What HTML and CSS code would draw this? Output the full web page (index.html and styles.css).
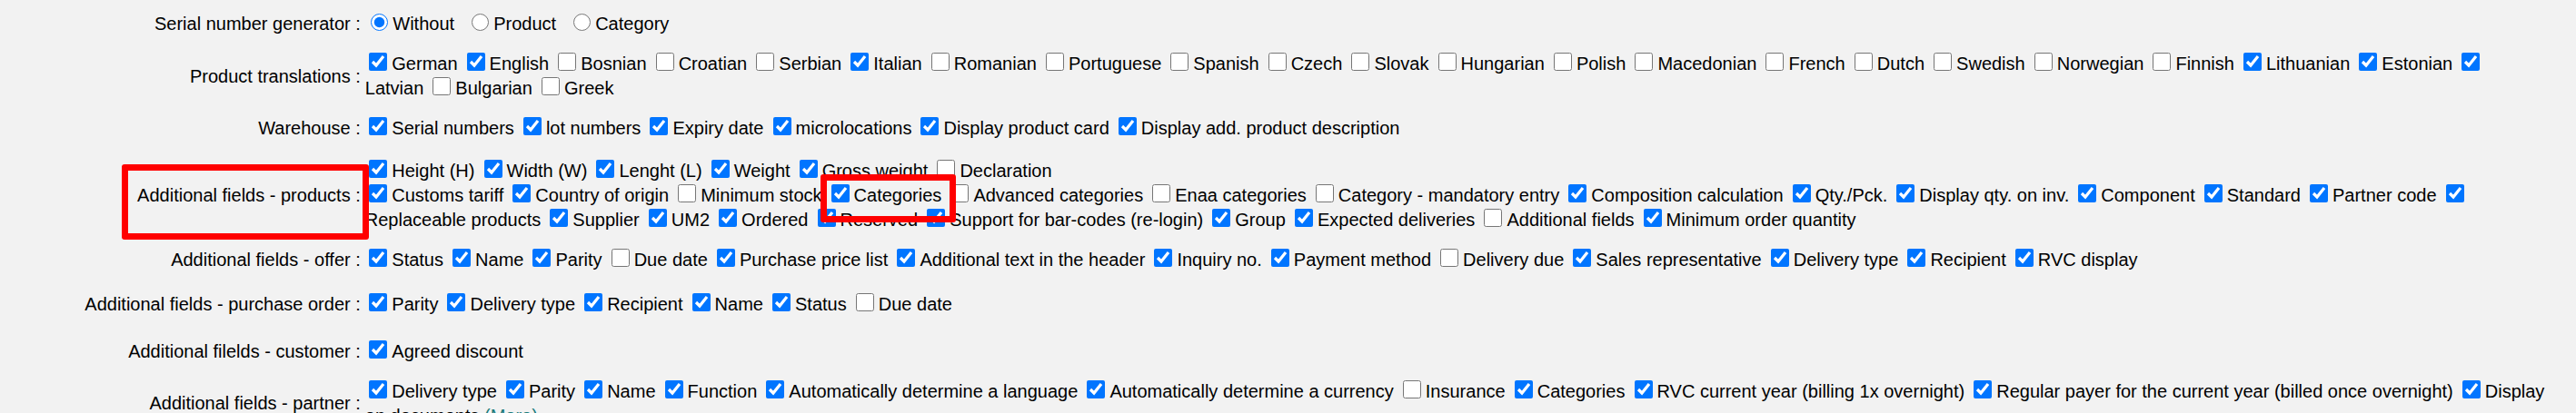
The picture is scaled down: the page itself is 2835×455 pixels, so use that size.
FILE: index.html
```html
<!DOCTYPE html>
<html lang="en">
<head>
<meta charset="utf-8">
<title>Settings</title>
<link rel="stylesheet" href="styles.css">
</head>
<body>
<div class="stage">
<table class="settings">
<colgroup><col class="label-col"><col class="value-col"></colgroup>
<tr class="row-first">
<th>Serial number generator :</th>
<td><label class="opt radio"><input type="radio" name="sn" checked>Without</label> <label class="opt radio"><input type="radio" name="sn">Product</label> <label class="opt radio"><input type="radio" name="sn">Category</label></td>
</tr>
<tr>
<th>Product translations :</th>
<td class="narrow"><label class="opt"><input type="checkbox" checked>German</label> <label class="opt"><input type="checkbox" checked>English</label> <label class="opt"><input type="checkbox">Bosnian</label> <label class="opt"><input type="checkbox">Croatian</label> <label class="opt"><input type="checkbox">Serbian</label> <label class="opt"><input type="checkbox" checked>Italian</label> <label class="opt"><input type="checkbox">Romanian</label> <label class="opt"><input type="checkbox">Portuguese</label> <label class="opt"><input type="checkbox">Spanish</label> <label class="opt"><input type="checkbox">Czech</label> <label class="opt"><input type="checkbox">Slovak</label> <label class="opt"><input type="checkbox">Hungarian</label> <label class="opt"><input type="checkbox">Polish</label> <label class="opt"><input type="checkbox">Macedonian</label> <label class="opt"><input type="checkbox">French</label> <label class="opt"><input type="checkbox">Dutch</label> <label class="opt"><input type="checkbox">Swedish</label> <label class="opt"><input type="checkbox">Norwegian</label> <label class="opt"><input type="checkbox">Finnish</label> <label class="opt"><input type="checkbox" checked>Lithuanian</label> <label class="opt"><input type="checkbox" checked>Estonian</label> <label class="opt"><input type="checkbox" checked>Latvian</label> <label class="opt"><input type="checkbox">Bulgarian</label> <label class="opt"><input type="checkbox">Greek</label></td>
</tr>
<tr>
<th>Warehouse :</th>
<td><label class="opt"><input type="checkbox" checked>Serial numbers</label> <label class="opt"><input type="checkbox" checked>lot numbers</label> <label class="opt"><input type="checkbox" checked>Expiry date</label> <label class="opt"><input type="checkbox" checked>microlocations</label> <label class="opt"><input type="checkbox" checked>Display product card</label> <label class="opt"><input type="checkbox" checked>Display add. product description</label></td>
</tr>
<tr class="row-products">
<th>Additional fields - products :</th>
<td><label class="opt"><input type="checkbox" checked>Height (H)</label> <label class="opt"><input type="checkbox" checked>Width (W)</label> <label class="opt"><input type="checkbox" checked>Lenght (L)</label> <label class="opt"><input type="checkbox" checked>Weight</label> <label class="opt"><input type="checkbox" checked>Gross weight</label> <label class="opt"><input type="checkbox">Declaration</label><br><label class="opt"><input type="checkbox" checked>Customs tariff</label> <label class="opt"><input type="checkbox" checked>Country of origin</label> <label class="opt"><input type="checkbox">Minimum stock</label> <label class="opt"><input type="checkbox" checked>Categories</label> <label class="opt"><input type="checkbox">Advanced categories</label> <label class="opt"><input type="checkbox">Enaa categories</label> <label class="opt"><input type="checkbox">Category - mandatory entry</label> <label class="opt"><input type="checkbox" checked>Composition calculation</label> <label class="opt"><input type="checkbox" checked>Qty./Pck.</label> <label class="opt"><input type="checkbox" checked>Display qty. on inv.</label> <label class="opt"><input type="checkbox" checked>Component</label> <label class="opt"><input type="checkbox" checked>Standard</label> <label class="opt"><input type="checkbox" checked>Partner code</label> <label class="opt"><input type="checkbox" checked>Replaceable products</label> <label class="opt"><input type="checkbox" checked>Supplier</label> <label class="opt"><input type="checkbox" checked>UM2</label> <label class="opt"><input type="checkbox" checked>Ordered</label> <label class="opt"><input type="checkbox" checked>Reserved</label> <label class="opt"><input type="checkbox" checked>Support for bar-codes (re-login)</label> <label class="opt"><input type="checkbox" checked>Group</label> <label class="opt"><input type="checkbox" checked>Expected deliveries</label> <label class="opt"><input type="checkbox">Additional fields</label> <label class="opt"><input type="checkbox" checked>Minimum order quantity</label></td>
</tr>
<tr>
<th>Additional fields - offer :</th>
<td><label class="opt"><input type="checkbox" checked>Status</label> <label class="opt"><input type="checkbox" checked>Name</label> <label class="opt"><input type="checkbox" checked>Parity</label> <label class="opt"><input type="checkbox">Due date</label> <label class="opt"><input type="checkbox" checked>Purchase price list</label> <label class="opt"><input type="checkbox" checked>Additional text in the header</label> <label class="opt"><input type="checkbox" checked>Inquiry no.</label> <label class="opt"><input type="checkbox" checked>Payment method</label> <label class="opt"><input type="checkbox">Delivery due</label> <label class="opt"><input type="checkbox" checked>Sales representative</label> <label class="opt"><input type="checkbox" checked>Delivery type</label> <label class="opt"><input type="checkbox" checked>Recipient</label> <label class="opt"><input type="checkbox" checked>RVC display</label></td>
</tr>
<tr class="row-purchase">
<th>Additional fields - purchase order :</th>
<td><label class="opt"><input type="checkbox" checked>Parity</label> <label class="opt"><input type="checkbox" checked>Delivery type</label> <label class="opt"><input type="checkbox" checked>Recipient</label> <label class="opt"><input type="checkbox" checked>Name</label> <label class="opt"><input type="checkbox" checked>Status</label> <label class="opt"><input type="checkbox">Due date</label></td>
</tr>
<tr class="row-customer">
<th>Additional filelds - customer :</th>
<td><label class="opt"><input type="checkbox" checked>Agreed discount</label></td>
</tr>
<tr>
<th>Additional fields - partner :</th>
<td><label class="opt"><input type="checkbox" checked>Delivery type</label> <label class="opt"><input type="checkbox" checked>Parity</label> <label class="opt"><input type="checkbox" checked>Name</label> <label class="opt"><input type="checkbox" checked>Function</label> <label class="opt"><input type="checkbox" checked>Automatically determine a language</label> <label class="opt"><input type="checkbox" checked>Automatically determine a currency</label> <label class="opt"><input type="checkbox">Insurance</label> <label class="opt"><input type="checkbox" checked>Categories</label> <label class="opt"><input type="checkbox" checked>RVC current year (billing 1x overnight)</label> <label class="opt"><input type="checkbox" checked>Regular payer for the current year (billed once overnight)</label> <label class="opt"><input type="checkbox" checked>Display on documents</label> <a class="more" href="#">(More)</a></td>
</tr>
</table>
<div class="mark mark-label"></div>
<div class="mark mark-item"></div>
</div>
</body>
</html>
```
FILE: styles.css
```css
html, body {
  margin: 0;
  padding: 0;
  background: #f2f2f2;
}

body {
  font-family: "Liberation Sans", Arial, sans-serif;
  font-size: 20px;
  color: #000;
  overflow: hidden;
}

.stage {
  position: relative;
  width: 2835px;
}

.settings {
  border-collapse: collapse;
  table-layout: fixed;
  width: 2815px;
  margin-top: 4.8px;
}

.label-col {
  width: 401.8px;
}

.settings th {
  font-weight: normal;
  text-align: right;
  vertical-align: middle;
  white-space: nowrap;
  padding: 8.5px 5px 8.5px 0;
  line-height: 27px;
}

.settings td {
  vertical-align: middle;
  padding: 8.5px 0;
  line-height: 27px;
}

.settings td.narrow {
  padding-right: 18px;
}

.row-products th,
.row-products td {
  padding-top: 11px;
}

.row-purchase th,
.row-purchase td {
  padding-top: 13.5px;
  padding-bottom: 12px;
}

.row-customer th,
.row-customer td {
  padding-top: 13px;
}

.opt input {
  width: 20px;
  height: 20px;
  margin: 0 5px 0 4.5px;
  vertical-align: -1px;
}

.opt.radio {
  margin-right: 7px;
}

.opt.radio input {
  width: 19px;
  height: 19px;
  margin: 0 5px 0 6.5px;
}

.more {
  color: #1c7c7c;
  text-decoration: none;
}

.mark {
  position: absolute;
  border: 7px solid #ff0000;
  border-radius: 3px;
  box-sizing: border-box;
}

.mark-label {
  left: 134px;
  top: 176.5px;
  width: 272px;
  height: 83px;
}

.mark-item {
  left: 903px;
  top: 187.5px;
  width: 149px;
  height: 53px;
}
```
